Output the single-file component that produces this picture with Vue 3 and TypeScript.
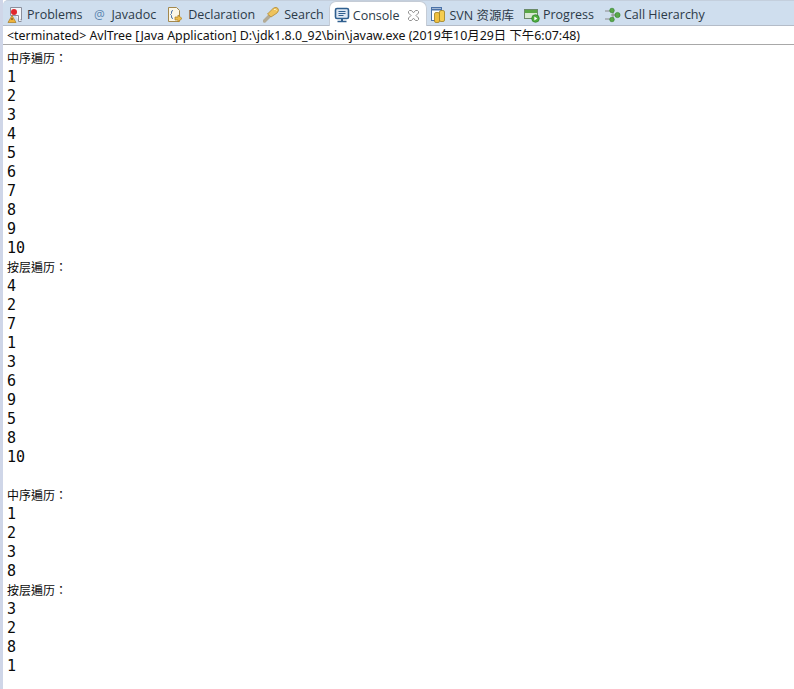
<script setup lang="ts">
const lines: string[] = ['中序遍历：','1','2','3','4','5','6','7','8','9','10','按层遍历：','4','2','7','1','3','6','9','5','8','10','','中序遍历：','1','2','3','8','按层遍历：','3','2','8','1']
</script>

<template>
  <div class="view">
    <div class="tabs">
      <div class="tab t-problems">
        <svg width="16" height="18" viewBox="0 0 16 18"><path d="M3.500 1.500h11v12.500h-3" fill="#f4f6fa" stroke="#8b8f9c"/><path d="M3.500 1.500v8h8v6h3" fill="#f4f6fa" stroke="#8b8f9c"/><circle cx="7" cy="6" r="3" fill="#e0262c"/><path d="M5 9.500 1 16.500h8z" fill="#f0b43c" stroke="#a87a20" stroke-width=".7"/><path d="M5 12v2" stroke="#5a3a10"/></svg>
        <span>Problems</span>
      </div>
      <div class="tab t-javadoc">
        <span class="at">@</span>
        <span>Javadoc</span>
      </div>
      <div class="tab t-decl">
        <svg width="16" height="18" viewBox="0 0 16 18"><path d="M1.500 1.500h8l3 3v11h-11z" fill="#fbf7e8" stroke="#a3884e"/><path d="M6 4.500q-1.500 0-1.500 1.500v1.500l-1 1 1 1v1.500q0 1.500 1.500 1.500" fill="none" stroke="#4a72a8"/><path d="M8 11h3V9l4 3.500L11 16v-2H8z" fill="#eebc4c" stroke="#a97f25" stroke-width=".7"/></svg>
        <span>Declaration</span>
      </div>
      <div class="tab t-search">
        <svg width="17" height="17" viewBox="0 0 17 17"><path d="M1.500 15 6 10.500" stroke="#b3ab96" stroke-width="3.500" stroke-linecap="round"/><path d="M4.500 8 10.500 2q3-1.500 4.500 .5t-1 4.500l-6 4z" fill="#eec35e" stroke="#b18a35" stroke-width=".8"/><path d="M11 3.500q2-.5 2.500 1" fill="none" stroke="#fff3c4"/></svg>
        <span>Search</span>
      </div>
      <div class="tab active">
        <svg width="16" height="16" viewBox="0 0 16 16"><rect x="1.500" y="1.500" width="13" height="10" rx="1.500" fill="#dfe8f4" stroke="#2f5f8f" stroke-width="1.600"/><path d="M4.500 4.500h7M4.500 6.500h7M4.500 8.500h5" stroke="#2f5f8f"/><path d="M8 12v2" stroke="#2f5f8f" stroke-width="2"/><path d="M3.500 14.500h9" stroke="#2f5f8f" stroke-width="1.500"/></svg>
        <span>Console</span>
        <svg class="close" width="11" height="11" viewBox="0 0 11 11"><path d="M1.500 .5 3.500 .5 5.500 2.800 7.500 .5 9.500 .5 10.500 1.500 10.500 3 8 5.500 10.500 8 10.500 9.500 9.500 10.500 7.500 10.500 5.500 8.200 3.500 10.500 1.500 10.500 .5 9.500 .5 8 3 5.500 .5 3 .5 1.500z" fill="#fff" stroke="#8f8f8f"/></svg>
      </div>
      <div class="tab t-svn">
        <svg width="16" height="18" viewBox="0 0 16 18"><rect x="1.500" y="1.500" width="10" height="13" fill="#fff" stroke="#4a72a8"/><path d="M2 3.500h9" stroke="#4a72a8" stroke-width="2"/><rect x="4.500" y="6.500" width="5" height="10" rx="1.500" fill="#f0c040" stroke="#a08020" stroke-width=".8"/><rect x="9.500" y="4.500" width="5" height="11" rx="1.500" fill="#f5cd50" stroke="#a08020" stroke-width=".8"/></svg>
        <span>SVN 资源库</span>
      </div>
      <div class="tab t-progress">
        <svg width="16" height="16" viewBox="0 0 16 16"><rect x=".5" y="2.500" width="13" height="9" fill="#d8e8d4" stroke="#6a8a68"/><rect x="1" y="3" width="12" height="3" fill="#58a845"/><circle cx="11.500" cy="11.500" r="3.800" fill="#4fae3f" stroke="#2f7f2a" stroke-width=".7"/><path d="m10.300 9.500 3 2-3 2z" fill="#fff"/></svg>
        <span>Progress</span>
      </div>
      <div class="tab t-call">
        <svg width="17" height="16" viewBox="0 0 17 16"><path d="M1 4h6M1 12h6M9 4v8M7 8h5" stroke="#8a8a8a" fill="none"/><circle cx="8" cy="3.500" r="2.300" fill="#5aa84a" stroke="#2f7f2a" stroke-width=".6"/><circle cx="8" cy="12.500" r="2.300" fill="#5aa84a" stroke="#2f7f2a" stroke-width=".6"/><circle cx="13.500" cy="8" r="2.600" fill="#5aa84a" stroke="#2f7f2a" stroke-width=".6"/></svg>
        <span>Call Hierarchy</span>
      </div>
    </div>
    <div class="status">&lt;terminated&gt;  AvlTree [Java Application] D:\jdk1.8.0_92\bin\javaw.exe (2019年10月29日 下午6:07:48)</div>
    <div class="console">
      <div v-for="(l, i) in lines" :key="i" class="line" :class="{ cjk: /[^\x00-\x7f]/.test(l) }">{{ l }}</div>
    </div>
  </div>
</template>

<style scoped>
.view {
  width: 794px;
  height: 689px;
  box-sizing: border-box;
  overflow: hidden;
  background: #fff;
  border-left: 3px solid #cfd6e8;
  font-family: "Liberation Sans", "Noto Sans CJK SC", sans-serif;
  color: #111;
}
.tabs {
  height: 26px;
  box-sizing: border-box;
  display: flex;
  align-items: center;
  background: #cfdeee;
  border-top: 1px solid #c4cfdd;
  border-bottom: 1px solid #b4bcc8;
  border-top-left-radius: 5px;
  font-family: "Open Sans", "Noto Sans CJK SC", sans-serif;
  font-size: 12.500px;
  color: #2c3a48;
  padding: 3px 0 0 4px;
}
.tab {
  display: flex;
  align-items: center;
  gap: 4px;
  height: 21px;
  flex: none;
}
.t-javadoc { margin-left: 11px; gap: 6px; }
.t-decl { margin-left: 11px; gap: 5px; }
.t-search { margin-left: 8px; gap: 4px; }
.at { color: #5b86b0; font-size: 12px; width: 12px; text-align: center; }
.active {
  background: #fff;
  align-self: flex-start;
  margin-left: 5px;
  height: 25px;
  margin-top: -3px;
  margin-bottom: -1px;
  padding: 2px 7px 0 4px;
  border: 1px solid #c5ccd6;
  border-bottom: none;
  border-radius: 7px 7px 0 0;
  box-sizing: border-box;
  gap: 3px;
}
.close { margin-left: 5px; }
.t-svn { margin-left: 3px; gap: 4px; }
.t-progress { margin-left: 10px; gap: 3px; }
.t-call { margin-left: 10px; gap: 3px; }
.status {
  height: 19px;
  line-height: 18px;
  padding: 1px 0 0 4px;
  box-sizing: border-box;
  border-bottom: 1px solid #a8a8a8;
  font-family: "Noto Sans", "Noto Sans CJK SC", sans-serif;
  font-size: 12.400px;
  white-space: pre;
  overflow: hidden;
}
.console {
  padding: 3px 0 0 4px;
}
.line {
  height: 19px;
  line-height: 21px;
  font-family: "DejaVu Sans Mono", "Noto Sans CJK SC", monospace;
  font-size: 15px;
  color: #0a0a0a;
}
.line.cjk {
  font-family: "Noto Sans CJK TC", sans-serif;
  font-size: 12px;
  line-height: 19px;
}
</style>
